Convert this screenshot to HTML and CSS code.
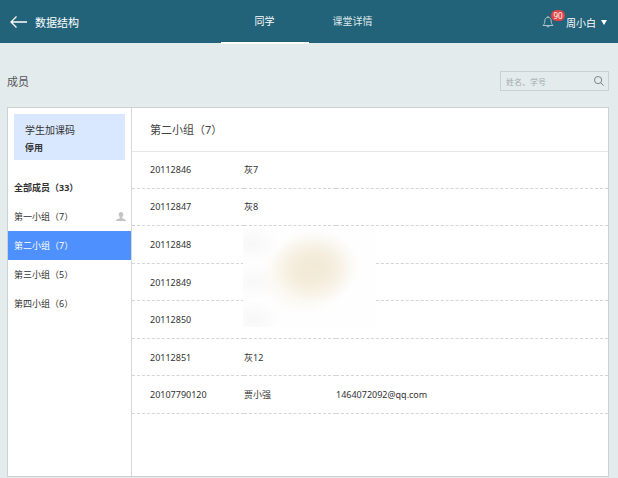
FILE: index.html
```
<!DOCTYPE html>
<html lang="zh-CN">
<head>
    <meta charset="UTF-8">
    <meta name="viewport" content="width=device-width, initial-scale=1.0">
    <title>数据结构 - 成员</title>
    <link rel="stylesheet" href="styles.css">
</head>
<body>
    <header class="header">
        <a class="back" href="#">
            <svg width="17" height="12" viewBox="0 0 17 12" fill="none" stroke="currentColor" stroke-width="1.3"><path d="M6.5 .5L1 6l5.5 5.5M1 6h16"/></svg>
            数据结构
        </a>
        <nav class="tabs">
            <a class="tab active" href="#">同学</a>
            <a class="tab" href="#">课堂详情</a>
        </nav>
        <div class="user">
            <button class="bell" type="button" aria-label="通知">
                <svg width="12" height="12" viewBox="0 0 12 12" fill="none" stroke="currentColor" stroke-width=".9"><path d="M1 9.5h10C9.6 8.2 9.3 7 9.2 5 9.1 2.6 7.8 1.3 6 1.3S2.9 2.6 2.8 5C2.7 7 2.4 8.2 1 9.5zM4.7 9.8c.3 1.7 2.3 1.7 2.6 0M6 0v1.3"/></svg>
                <span class="badge">90</span>
            </button>
            <button class="user-name" type="button">周小白 <span class="caret"></span></button>
        </div>
    </header>

    <div class="top-bar">
        <h1>成员</h1>
        <form class="search">
            <input type="text" placeholder="姓名、学号" aria-label="姓名、学号">
            <button type="submit" aria-label="搜索">
                <svg width="10" height="10" viewBox="0 0 10 10" fill="none" stroke="currentColor" stroke-width=".9"><circle cx="4.1" cy="4.1" r="3.6"/><path d="M6.7 6.7L9.7 9.7"/></svg>
            </button>
        </form>
    </div>

    <main class="panel">
        <aside class="sidebar">
            <div class="code-box">
                <h2>学生加课码</h2>
                <button type="button">停用</button>
            </div>
            <ul class="groups">
                <li><a class="all" href="#">全部成员（33）</a></li>
                <li>
                    <a href="#">第一小组（7）
                        <svg width="10" height="9" viewBox="0 0 10 9" fill="#c4c4c4"><path d="M5 0C3.5 0 2.7 1 2.7 2.4c0 1.2.5 2.2 1.2 2.8v.7C3.5 6.7 0 6.5 0 9h10C10 6.5 6.5 6.7 6.1 5.9v-.7c.7-.6 1.2-1.6 1.2-2.8C7.3 1 6.5 0 5 0z"/></svg>
                    </a>
                </li>
                <li><a class="active" href="#">第二小组（7）</a></li>
                <li><a href="#">第三小组（5）</a></li>
                <li><a href="#">第四小组（6）</a></li>
            </ul>
        </aside>
        <section class="content">
            <h2>第二小组（7）</h2>
            <div class="members-wrap">
                <table class="members">
                    <tr><td class="number">20112846</td><td class="name">灰7</td><td></td></tr>
                    <tr><td>20112847</td><td>灰8</td><td></td></tr>
                    <tr><td>20112848</td><td></td><td></td></tr>
                    <tr><td>20112849</td><td></td><td></td></tr>
                    <tr><td>20112850</td><td></td><td></td></tr>
                    <tr><td>20112851</td><td>灰12</td><td></td></tr>
                    <tr><td>20107790120</td><td>贾小强</td><td>1464072092@qq.com</td></tr>
                </table>
                <div class="mask"></div>
            </div>
        </section>
    </main>
</body>
</html>
```

FILE: styles.css
```
* {
    margin: 0;
    padding: 0;
    box-sizing: border-box;
}
body {
    min-height: 100vh;
    display: flex;
    flex-direction: column;
    background: #e3ebed;
    color: #333;
    font-family: "Noto Sans", "Noto Sans CJK SC", sans-serif;
    font-size: 9px;
}
a {
    color: inherit;
    text-decoration: none;
}
button, input {
    font: inherit;
    color: inherit;
    border: none;
    background: none;
}
button {
    cursor: pointer;
}
h1, h2 {
    font-size: 11px;
    font-weight: normal;
}

/* header */
.header {
    height: 43px;
    padding: 0 11px 0 10px;
    display: grid;
    grid-template-columns: 1fr auto 1fr;
    align-items: center;
    background: #226379;
    color: white;
    font-size: 10px;
}
.back {
    display: flex;
    align-items: center;
    gap: 8px;
    font-size: 11px;
}
.tabs {
    display: flex;
}
.tab {
    width: 88px;
    height: 44px;
    line-height: 42px;
    text-align: center;
    color: #dfe9ec;
    border-bottom: 2px solid transparent;
}
.tab.active {
    color: white;
    border-color: white;
}
.user {
    display: flex;
    align-items: center;
    justify-content: flex-end;
    gap: 12px;
}
.bell {
    position: relative;
    display: flex;
    color: #b9ced5;
}
.badge {
    position: absolute;
    left: 9px;
    top: -6px;
    width: 14px;
    border-radius: 6px;
    background: #e04444;
    color: white;
    font-size: 8px;
    line-height: 11px;
    text-align: center;
}
.user-name {
    display: flex;
    align-items: center;
    gap: 5px;
}
.caret {
    border: 3px solid transparent;
    border-top: 5px solid white;
    border-bottom: none;
}

/* title and search */
.top-bar {
    display: flex;
    align-items: center;
    justify-content: space-between;
    padding: 28px 9px 16px 7px;
}
.top-bar h1 {
    color: #555;
}
.search {
    display: flex;
    align-items: center;
    width: 109px;
    height: 20px;
    padding: 0 4px 0 5px;
    border: 1px solid #c9d2d3;
}
.search input {
    flex: 1;
    min-width: 0;
    font-size: 8px;
    outline: none;
}
.search input::placeholder {
    color: #a5acad;
}
.search button {
    display: flex;
    color: #777;
}

/* members panel */
.panel {
    flex: 1;
    display: flex;
    margin: 0 9px 1px 7px;
    background: white;
    border: 1px solid #cdd1d2;
}
.sidebar {
    width: 124px;
    flex-shrink: 0;
    padding-top: 6px;
    border-right: 1px solid #d5d7d8;
}
.code-box {
    margin: 0 6px 13px;
    padding: 8px 11px 3px;
    background: #dae8ff;
}
.code-box h2 {
    font-size: 10px;
    line-height: 17px;
}
.code-box button {
    display: block;
    font-weight: bold;
    line-height: 18px;
}
.groups {
    list-style: none;
}
.groups a {
    display: flex;
    align-items: center;
    justify-content: space-between;
    padding: 0 5px 0 6px;
    line-height: 29px;
}
.groups .all {
    font-weight: bold;
}
.groups .active {
    background: #4d90fe;
    color: white;
}
.content {
    flex: 1;
}
.content h2 {
    padding-left: 18px;
    line-height: 43px;
    border-bottom: 1px solid #e6e8e8;
    color: #444;
}
.members-wrap {
    position: relative;
}
.members {
    width: 100%;
    height: 262px;
    border-collapse: collapse;
    table-layout: fixed;
}
.members td {
    padding: 0;
    border-bottom: 1px dashed #d3d6d6;
}
.members td:first-child {
    padding-left: 18px;
}
.members .number {
    width: 112px;
}
.members .name {
    width: 92px;
}

/* hidden names */
.mask {
    position: absolute;
    left: 111px;
    top: 76px;
    width: 132px;
    height: 99px;
    background:
        radial-gradient(ellipse 44px 36px at 72px 38px, #f2e9d5, #f2e9d5b0 40%, #f2e9d500),
        radial-gradient(ellipse 46px 38px at 62px 48px, #f6f0df, #f6f0df00),
        radial-gradient(ellipse 26px 18px at 10px 16px, #f7f7f7, #f7f7f700),
        radial-gradient(ellipse 26px 18px at 10px 54px, #f8f8f8, #f8f8f800),
        radial-gradient(ellipse 26px 18px at 10px 91px, #f7f7f7, #f7f7f700),
        #fefefe;
}
```
